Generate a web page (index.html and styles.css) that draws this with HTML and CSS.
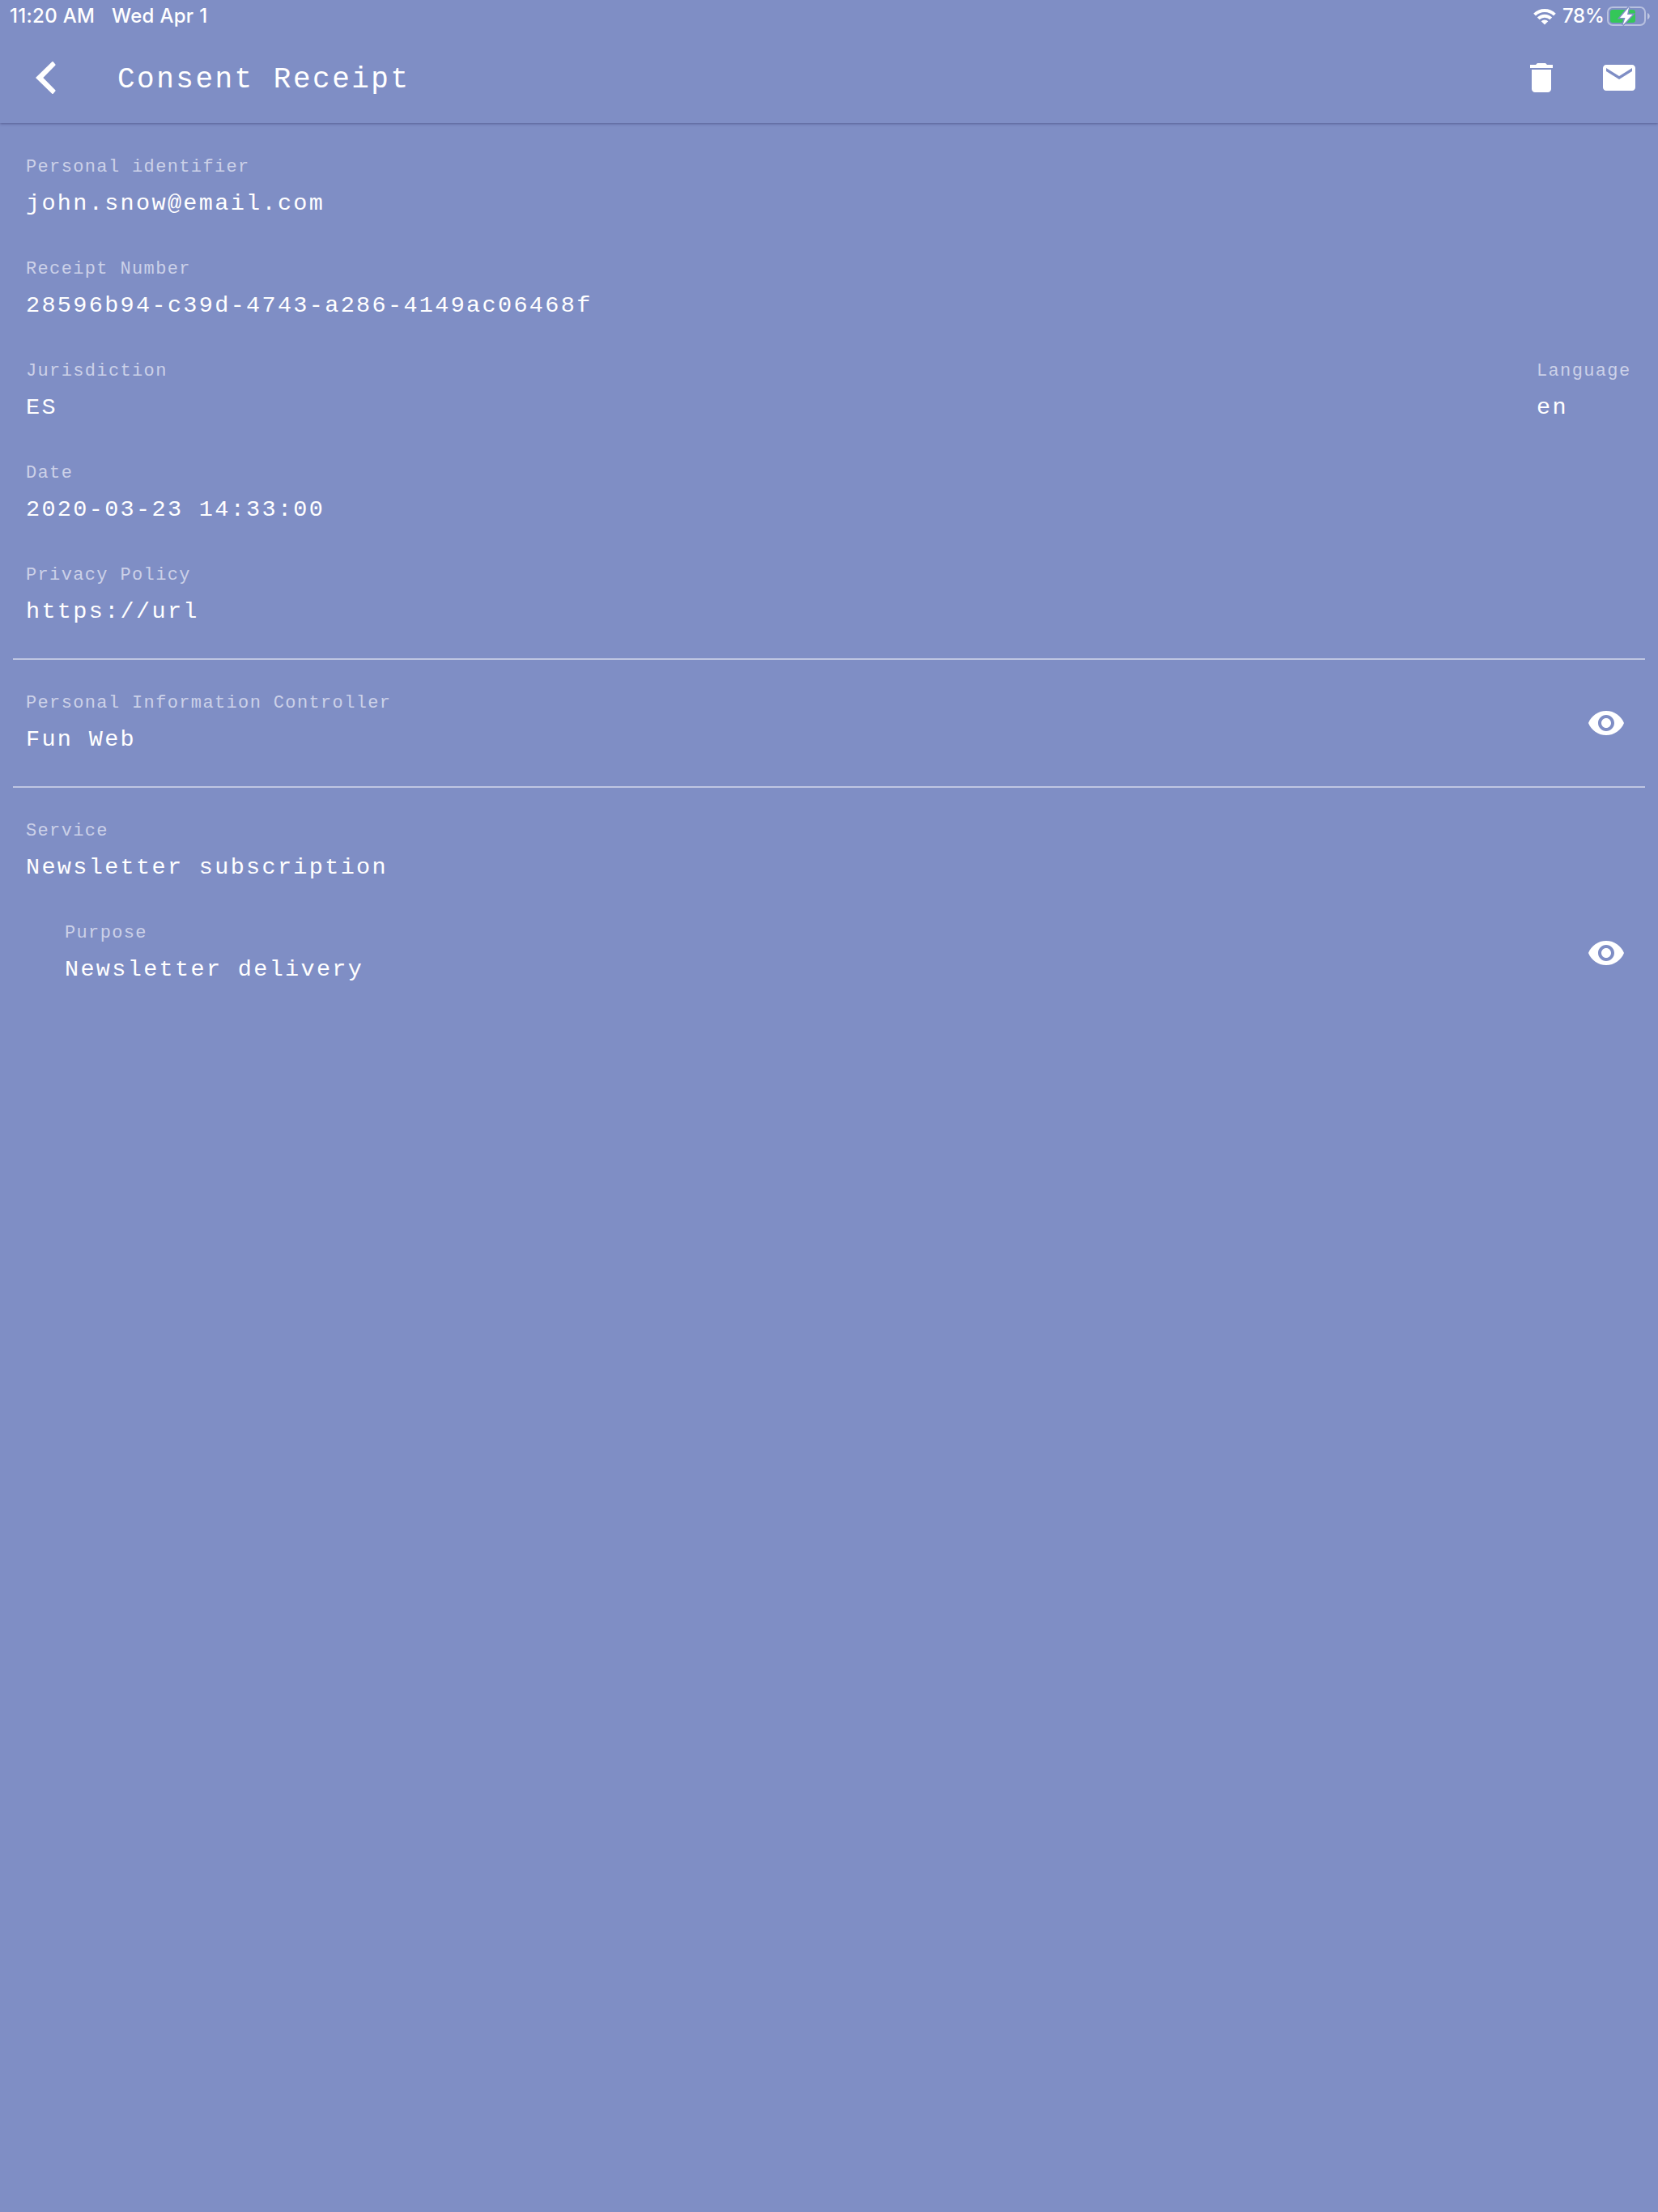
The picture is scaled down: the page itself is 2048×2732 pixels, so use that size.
FILE: index.html
```html
<!DOCTYPE html>
<html lang="en">
<head>
<meta charset="utf-8">
<title>Consent Receipt</title>
<link rel="stylesheet" href="styles.css">
</head>
<body>
<header class="header">
  <div class="status">
    <span class="status-time">11:20 AM</span>
    <span class="status-date">Wed Apr 1</span>
    <svg class="wifi" width="28" height="21" viewBox="0 0 28 21" fill="none" stroke="#fff" stroke-width="4"><path d="M1.600 8.100a17.600 17.600 0 0 1 24.800 0M6.200 12.900a11 11 0 0 1 15.600 0"/><path d="M14 20.500l-4.300-4.300a6.100 6.100 0 0 1 8.600 0z" fill="#fff" stroke="none"/></svg>
    <span class="status-percent">78%</span>
    <svg class="battery" width="54" height="24" viewBox="0 0 54 24"><rect x="1" y="1" width="46" height="22" rx="6" fill="none" stroke="#fff" stroke-opacity=".45" stroke-width="2"/><path d="M50 8v8c3.600-1.200 3.600-6.800 0-8z" fill="#fff" fill-opacity=".5"/><rect x="4" y="4" width="31" height="16" rx="3" fill="#34c759"/><path d="M27 1L16 14h6.500l-3 9L31.500 10H25z" fill="#fff" stroke="#7f8ec5" stroke-width="3" paint-order="stroke"/></svg>
  </div>
  <div class="toolbar">
    <svg class="back" width="25" height="40" viewBox="0 0 25 40"><path d="M20.300 .3q.7-.6 1.400 0l2.700 3.200q.5.700-.1 1.300L9.300 20l15 15.200q.6.600.1 1.300l-2.700 3.200q-.7.600-1.400 0L0 20z" fill="#fff"/></svg>
    <h1 class="title">Consent Receipt</h1>
    <svg class="icon" viewBox="0 0 24 24"><path d="M6 19c0 1.100.9 2 2 2h8c1.100 0 2-.9 2-2V7H6v12zM19 4h-3.500l-1-1h-5l-1 1H5v2h14V4z"/></svg>
    <svg class="icon" viewBox="0 0 24 24"><path d="M20 4H4c-1.100 0-1.990.9-1.990 2L2 18c0 1.100.9 2 2 2h16c1.100 0 2-.9 2-2V6c0-1.100-.9-2-2-2zm0 4l-8 5-8-5V6l8 5 8-5v2z"/></svg>
  </div>
</header>
<main class="content">
  <section class="section">
    <div class="field"><div class="label">Personal identifier</div><div class="value">john.snow@email.com</div></div>
    <div class="field"><div class="label">Receipt Number</div><div class="value">28596b94-c39d-4743-a286-4149ac06468f</div></div>
    <div class="row">
      <div class="field"><div class="label">Jurisdiction</div><div class="value">ES</div></div>
      <div class="field language"><div class="label">Language</div><div class="value">en</div></div>
    </div>
    <div class="field"><div class="label">Date</div><div class="value">2020-03-23 14:33:00</div></div>
    <div class="field"><div class="label">Privacy Policy</div><div class="value">https://url</div></div>
  </section>
  <section class="section">
    <div class="row">
      <div class="field"><div class="label">Personal Information Controller</div><div class="value">Fun Web</div></div>
      <svg class="icon eye" viewBox="0 0 24 24"><path d="M12 4.500C7 4.500 2.730 7.610 1 12c1.730 4.390 6 7.500 11 7.500s9.270-3.110 11-7.500c-1.730-4.390-6-7.500-11-7.500zM12 17c-2.760 0-5-2.240-5-5s2.240-5 5-5 5 2.240 5 5-2.240 5-5 5zm0-8c-1.660 0-3 1.340-3 3s1.340 3 3 3 3-1.340 3-3-1.340-3-3-3z"/></svg>
    </div>
  </section>
  <section class="section">
    <div class="field"><div class="label">Service</div><div class="value">Newsletter subscription</div></div>
    <div class="row purpose">
      <div class="field"><div class="label">Purpose</div><div class="value">Newsletter delivery</div></div>
      <svg class="icon eye" viewBox="0 0 24 24"><path d="M12 4.500C7 4.500 2.730 7.610 1 12c1.730 4.390 6 7.500 11 7.500s9.270-3.110 11-7.500c-1.730-4.390-6-7.500-11-7.500zM12 17c-2.760 0-5-2.240-5-5s2.240-5 5-5 5 2.240 5 5-2.240 5-5 5zm0-8c-1.660 0-3 1.340-3 3s1.340 3 3 3 3-1.340 3-3-1.340-3-3-3z"/></svg>
    </div>
  </section>
</main>
</body>
</html>
```
FILE: styles.css
```css
* { box-sizing: border-box; }
body {
  margin: 0;
  min-height: 2732px;
  background: #7f8ec5;
  color: #fff;
  font-family: "Liberation Mono", monospace;
}
svg { display: block; flex: none; }
.header {
  height: 152px;
  box-shadow: 0 1px 3px rgba(40, 40, 90, .45);
}
.status {
  display: flex;
  align-items: center;
  height: 40px;
  padding: 0 9px 0 12px;
  font: 450 24px/40px Inter, sans-serif;
  letter-spacing: .3px;
  white-space: nowrap;
}
.status-time { width: 126px; }
.status-date { flex: 1; }
.wifi { margin-right: 8px; }
.status-percent { width: 55px; letter-spacing: -.3px; }
.toolbar {
  display: flex;
  align-items: center;
  height: 112px;
  padding: 0 24px 0 44px;
}
.back { margin-right: 76px; }
.title {
  flex: 1;
  margin: 0;
  padding-top: 6px;
  font-size: 36px;
  font-weight: 400;
  line-height: 48px;
  letter-spacing: 2.5px;
}
.icon { width: 48px; height: 48px; fill: #fff; }
.icon + .icon { margin-left: 48px; }
.content { padding: 0 16px; }
.section { padding: 15px 16px; border-bottom: 2px solid #bfc6e2; }
.section:first-child { padding-top: 16px; }
.section:last-child { border-bottom: 0; }
.row { display: flex; align-items: center; justify-content: space-between; }
.field { height: 126px; padding: 23px 0 21px; }
.label {
  margin-bottom: 9px;
  font-size: 22px;
  line-height: 32px;
  letter-spacing: 1.36px;
  color: #ccd1e8;
}
.value {
  font-size: 28.5px;
  line-height: 40px;
  letter-spacing: 2.33px;
}
.language { width: 118px; white-space: nowrap; }
.eye { margin-right: 8px; }
.purpose { padding-left: 48px; }
```
